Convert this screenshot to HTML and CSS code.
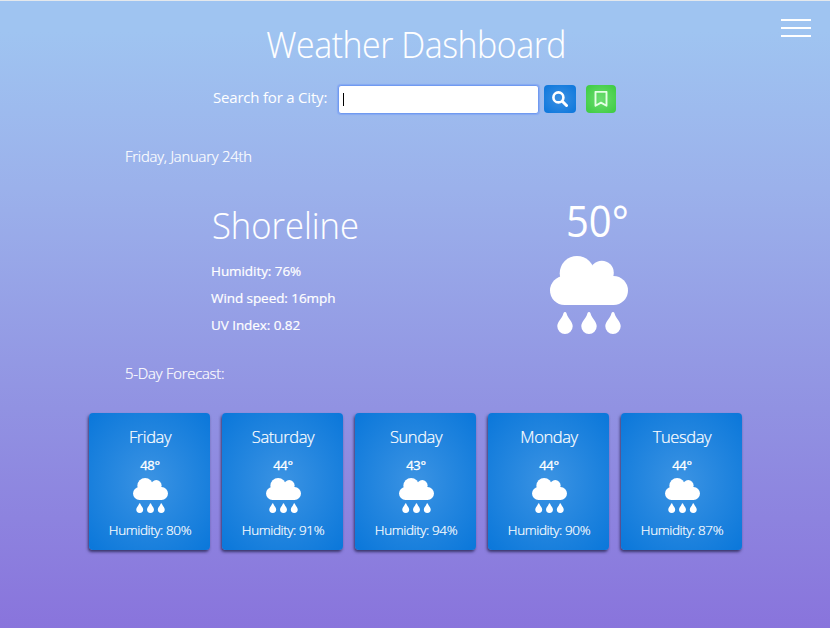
FILE: index.html
```html
<!DOCTYPE html>
<html lang="en">
<head>
<meta charset="utf-8">
<title>Weather Dashboard</title>
<link rel="stylesheet" href="styles.css">
</head>
<body>
<svg class="defs" aria-hidden="true">
  <symbol id="rain" viewBox="0 0 78 78">
    <circle cx="27" cy="17.3" r="17.3"/>
    <circle cx="51.8" cy="16.7" r="12"/>
    <rect y="20" width="78" height="29" rx="14.5"/>
    <path id="drop" d="M15 56c1.600 0 1.400 1.600 2.400 3.800 1.600 3.600 5.300 6.500 5.300 10.500a7.700 7.700 0 0 1-15.400 0c0-4 3.700-6.900 5.300-10.500 1-2.200.8-3.800 2.400-3.800z"/>
    <use href="#drop" x="24"/>
    <use href="#drop" x="48"/>
  </symbol>
</svg>
<header class="header">
  <h1 class="title">Weather Dashboard</h1>
  <button class="menu" aria-label="Menu"><i></i><i></i><i></i></button>
</header>
<form class="search">
  <label class="label" for="city">Search for a City:</label>
  <div class="field" id="city"><i class="caret"></i></div>
  <button class="btn find" type="button" aria-label="Search"><svg viewBox="0 0 16 16"><circle cx="6.400" cy="6.400" r="5" fill="none" stroke="#fff" stroke-width="2.600"/><path d="M10.500 10.500l4 4" stroke="#fff" stroke-width="3" stroke-linecap="round"/></svg></button>
  <button class="btn save" type="button" aria-label="Save"><svg viewBox="0 0 16 16"><path d="M2.500 .9h11v13.900l-5.500-3.200-5.500 3.200z" fill="none" stroke="#e4ffe4" stroke-width="1.900" stroke-linejoin="round"/></svg></button>
</form>
<main>
  <p class="note date">Friday, January 24th</p>
  <section class="current">
    <div class="info">
      <h2 class="city">Shoreline</h2>
      <p>Humidity: 76%</p>
      <p>Wind speed: 16mph</p>
      <p>UV Index: 0.82</p>
    </div>
    <div class="now">
      <p class="temp">50°</p>
      <svg class="big"><use href="#rain"/></svg>
    </div>
  </section>
  <p class="note forecast">5-Day Forecast:</p>
  <section class="cards">
    <article class="card"><h3>Friday</h3><p class="deg">48°</p><svg><use href="#rain"/></svg><p class="hum">Humidity: 80%</p></article>
    <article class="card"><h3>Saturday</h3><p class="deg">44°</p><svg><use href="#rain"/></svg><p class="hum">Humidity: 91%</p></article>
    <article class="card"><h3>Sunday</h3><p class="deg">43°</p><svg><use href="#rain"/></svg><p class="hum">Humidity: 94%</p></article>
    <article class="card"><h3>Monday</h3><p class="deg">44°</p><svg><use href="#rain"/></svg><p class="hum">Humidity: 90%</p></article>
    <article class="card"><h3>Tuesday</h3><p class="deg">44°</p><svg><use href="#rain"/></svg><p class="hum">Humidity: 87%</p></article>
  </section>
</main>
</body>
</html>
```
FILE: styles.css
```css
* { box-sizing: border-box; margin: 0; padding: 0; }
html { height: 100%; }
body {
  height: 628px;
  overflow: hidden;
  border-top: 1px solid #e4e8ec;
  background: linear-gradient(#9fc4f1 5%, #9bb1eb 30%, #9192e2 65%, #8974dc 100%);
  color: #fff;
  font-family: "Open Sans", "Noto Sans", sans-serif;
  font-size: 14px;
  white-space: nowrap;
}
.defs { position: absolute; width: 0; height: 0; }
svg { display: block; fill: #fff; }
button { border: 0; background: none; }
.header { display: flex; justify-content: center; height: 83px; padding-top: 17px; position: relative; }
.title { font-size: 36.500px; font-weight: 300; line-height: 52px; letter-spacing: -0.500px; transform: translateX(.7px) scaleX(.928); -webkit-text-stroke: .1px #fff; }
.menu { position: absolute; right: 19px; top: 18px; width: 30px; display: flex; flex-direction: column; gap: 6px; }
.menu i { height: 2px; background: #fff; }
.search { display: flex; height: 30px; align-items: center; padding-left: 213px; }
.label { width: 125px; font-size: 15px; line-height: 28px; letter-spacing: -0.200px; margin-top: -4px; }
.field { width: 201px; height: 29px; background: #fff; border: 1px solid #709af0; border-radius: 3px; padding: 7px 4px; box-shadow: 0 0 1px 1px #86a9f2; }
.caret { display: block; width: 1px; height: 13px; background: #000; }
.btn { width: 32px; height: 28px; margin-left: 5px; border-radius: 4px; display: grid; place-items: center; }
.btn svg { width: 16px; height: 16px; }
.find { background: radial-gradient(#3b90e2, #0b76dc); }
.save { width: 30px; margin-left: 10px; background: radial-gradient(#6ddd72, #3bcb3f); }
.note { font-size: 14.800px; font-weight: 300; line-height: 20px; padding-left: 125px; letter-spacing: -0.200px; -webkit-text-stroke: .2px #fff; }
.date { margin-top: 32px; }
.current { display: flex; height: 197px; padding: 30px 0 0 211px; }
.info { width: 338px; }
.info p { line-height: 27px; font-size: 13.500px; letter-spacing: -0.070px; -webkit-text-stroke: .2px #fff; }
.city { font-size: 37px; font-weight: 300; line-height: 58px; margin-bottom: 4px; padding-left: 1px; transform: scaleX(.935); transform-origin: 0 50%; -webkit-text-stroke: .1px #fff; }
.now { width: 80px; padding-top: 0; }
.temp { font-size: 43px; line-height: 49px; padding-left: 17px; transform: scaleX(.93); transform-origin: 17px 50%; }
.big { width: 78px; height: 78px; margin: 11px 0 0 1px; }
.cards { display: flex; gap: 12px; padding: 30px 0 0 89px; }
.card { width: 121px; height: 137px; padding: 12px 0 0 1px; border-radius: 4px; text-align: center; background: radial-gradient(#3b93e3, #0a77da); box-shadow: -1px 2px 3px #25234fcc; }
.card h3 { font-size: 16.500px; font-weight: 300; line-height: 24px; letter-spacing: -0.400px; -webkit-text-stroke: .2px #fff; }
.deg { font-size: 13px; line-height: 20px; margin-top: 6px; letter-spacing: -0.300px; -webkit-text-stroke: .3px #fff; }
.card svg { width: 35px; height: 35px; margin: 3px auto 0; }
.hum { font-size: 13.500px; font-weight: 300; line-height: 20px; margin-top: 7px; letter-spacing: -0.400px; -webkit-text-stroke: .2px #fff; }
```
